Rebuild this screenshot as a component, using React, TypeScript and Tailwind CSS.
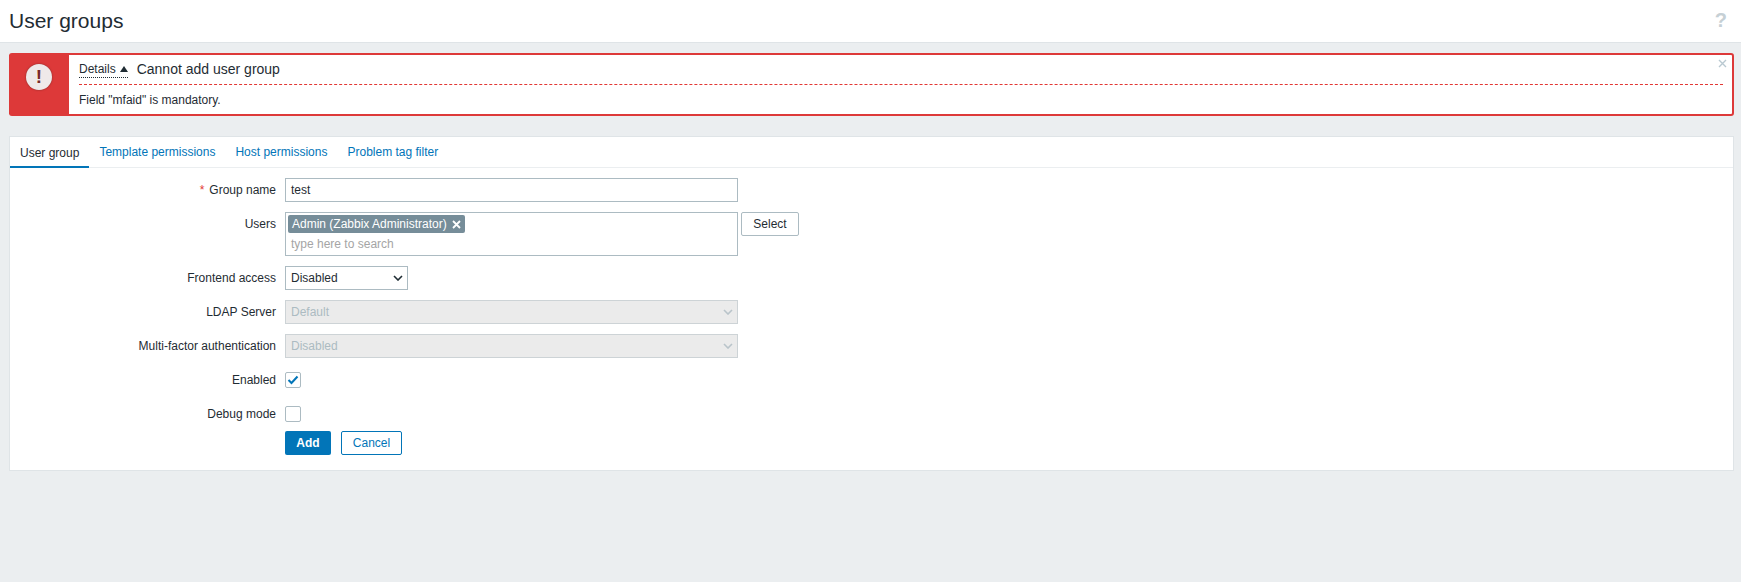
const Chevron = ({ color }: { color: string }) => (
  <svg width="10" height="6" viewBox="0 0 10 6" fill="none" stroke={color} strokeWidth="1.6">
    <path d="M1 1l4 4 4-4" />
  </svg>
);

function Row({ label, required, top, children }: { label: string; required?: boolean; top?: boolean; children: React.ReactNode }) {
  return (
    <div className={`flex gap-[9px] ${top ? 'items-start' : 'items-center'}`}>
      <label className="w-[266px] h-6 flex items-center justify-end text-[#1f2c33] text-[12px] shrink-0">
        {required && <span className="text-[#e33734] mr-[5px]">*</span>}
        {label}
      </label>
      {children}
    </div>
  );
}

function DisabledSelect({ value }: { value: string }) {
  return (
    <div className="w-[453px] h-6 border border-[#cdd3d6] bg-[#ebebeb] px-[5px] flex items-center justify-between text-[#acbbc2] text-[12px]">
      <span>{value}</span>
      <span className="-mr-[1px]"><Chevron color="#b9c4ca" /></span>
    </div>
  );
}

export default function App() {
  return (
    <div className="w-[1741px] h-[582px] bg-[#ebeef0] overflow-hidden font-['Liberation_Sans',Arial,sans-serif] text-[12px]">
      <header className="h-[43px] bg-white border-b border-[#dfe4e7] flex items-center justify-between pl-[9px] pr-[14px]">
        <h1 className="text-[21px] text-[#1f2c33] leading-none -mt-[2px]">User groups</h1>
        <span className="text-[#c6d0d5] text-[20px] font-bold -mt-[3px]">?</span>
      </header>

      <div className="relative mt-[10px] ml-[9px] mr-[7px] h-[63px] flex rounded-[3px] border-2 border-[#dd3939] bg-white">
        <div className="w-[60px] bg-[#dd3939] shrink-0 flex justify-center pt-[9px] -ml-[2px]">
          <div className="w-[26px] h-[26px] rounded-full bg-[#efe9e9] flex items-center justify-center text-[#7a2a28] text-[19px] font-bold shadow-[0_0_2px_#7a2a28]">!</div>
        </div>
        <div className="flex-1 pl-[10px] pr-[9px]">
          <div className="h-[29px] flex items-center">
            <span className="text-[#1f2c33] text-[12px] border-b border-dotted border-[#1f2c33] leading-[15px] flex items-center gap-[4px]">
              Details
              <svg width="8" height="6" viewBox="0 0 8 6" fill="#1f2c33"><path d="M4 0l4 6H0z" /></svg>
            </span>
            <span className="ml-[9px] text-[14px] text-[#1f2c33]">Cannot add user group</span>
          </div>
          <div className="border-t border-dashed border-[#e33734] pt-[6px] text-[12px] text-[#1f2c33]">Field "mfaid" is mandatory.</div>
        </div>
        <svg className="absolute right-[5px] top-[4px]" width="9" height="9" viewBox="0 0 9 9" stroke="#b9c9d1" strokeWidth="1.4">
          <path d="M1 1l7 7M8 1l-7 7" />
        </svg>
      </div>

      <div className="mt-[20px] ml-[9px] mr-[7px] h-[335px] bg-white border border-[#dfe4e7]">
        <div className="h-[31px] border-b border-[#ebeef0] flex text-[12px]">
          <div className="h-[31px] px-[10px] flex items-center text-[#1f2c33] border-b-2 border-[#0275b8] pt-[2px]">User group</div>
          <div className="h-[30px] px-[10px] flex items-center text-[#0275b8]">Template permissions</div>
          <div className="h-[30px] px-[10px] flex items-center text-[#0275b8]">Host permissions</div>
          <div className="h-[30px] px-[10px] flex items-center text-[#0275b8]">Problem tag filter</div>
        </div>

        <div className="pt-[10px] flex flex-col gap-[10px]">
          <Row label="Group name" required>
            <div className="w-[453px] h-6 border border-[#acbbc2] px-[5px] flex items-center text-[#1f2c33]">test</div>
          </Row>
          <Row label="Users" top>
            <div className="w-[453px] h-[44px] border border-[#acbbc2] px-[2px] pt-[2px]">
              <div className="flex">
                <span className="h-[18px] bg-[#768d99] text-white rounded-[2px] pl-[4px] pr-[4px] flex items-center gap-[5px]">
                  Admin (Zabbix Administrator)
                  <svg width="9" height="9" viewBox="0 0 9 9" stroke="#fff" strokeWidth="1.8"><path d="M1 1l7 7M8 1l-7 7" /></svg>
                </span>
              </div>
              <div className="px-[3px] mt-[2px] text-[#a5a5a5]">type here to search</div>
            </div>
            <button className="-ml-[6px] w-[58px] h-6 rounded-[2px] border border-[#acbbc2] bg-white text-[#1f2c33]">Select</button>
          </Row>
          <Row label="Frontend access">
            <div className="w-[123px] h-6 border border-[#acbbc2] px-[5px] flex items-center justify-between text-[#1f2c33]">
              <span>Disabled</span>
              <span className="-mr-[1px]"><Chevron color="#1f2c33" /></span>
            </div>
          </Row>
          <Row label="LDAP Server"><DisabledSelect value="Default" /></Row>
          <Row label="Multi-factor authentication"><DisabledSelect value="Disabled" /></Row>
          <Row label="Enabled">
            <div className="w-4 h-4 rounded-[2px] border border-[#acbbc2] flex items-center justify-center">
              <svg width="12" height="10" viewBox="0 0 12 10" fill="none" stroke="#0275b8" strokeWidth="2"><path d="M1.5 5l3 3 6-6.5" /></svg>
            </div>
          </Row>
          <Row label="Debug mode">
            <div className="w-4 h-4 rounded-[2px] border border-[#acbbc2]" />
          </Row>
          <div className="pl-[275px] flex gap-[10px] -mt-[5px]">
            <button className="w-[46px] h-6 rounded-[2px] bg-[#0275b8] text-white font-bold">Add</button>
            <button className="w-[61px] h-6 rounded-[2px] border border-[#0275b8] bg-white text-[#0275b8]">Cancel</button>
          </div>
        </div>
      </div>
    </div>
  );
}
